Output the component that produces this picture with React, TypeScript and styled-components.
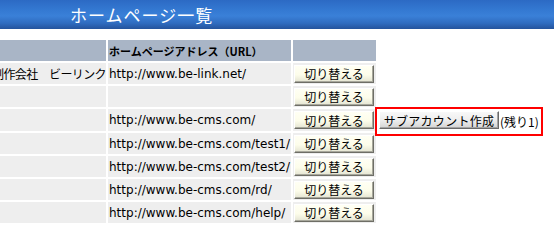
import React from "react";
import styled, { createGlobalStyle } from "styled-components";

type ISite = {
    company: string;
    url: string;
    subAccount?: number;
};

const sites: ISite[] = [
    { company: "制作会社　ビーリンク", url: "http://www.be-link.net/" },
    { company: "", url: "" },
    { company: "", url: "http://www.be-cms.com/", subAccount: 1 },
    { company: "", url: "http://www.be-cms.com/test1/" },
    { company: "", url: "http://www.be-cms.com/test2/" },
    { company: "", url: "http://www.be-cms.com/rd/" },
    { company: "", url: "http://www.be-cms.com/help/" },
];

const GlobalStyle = createGlobalStyle`
    body {
        margin: 0;
        background: #ffffff;
        font-family: "DejaVu Sans", "Noto Sans CJK JP", sans-serif;
        overflow: hidden;
    }
`;

const Page = styled.div`
    width: 554px;
    height: 250px;
    overflow: hidden;
`;

const TitleBar = styled.h1`
    margin: 0;
    height: 29px;
    padding-left: 70px;
    background: linear-gradient(
        to bottom,
        #2c6ac4 0%,
        #3479d2 35%,
        #3a80d8 55%,
        #2f6cc0 80%,
        #24539c 100%
    );
    color: #ffffff;
    font-family: "Noto Sans CJK JP", sans-serif;
    font-size: 17px;
    font-weight: 400;
    line-height: 29px;
    letter-spacing: 1px;
`;

const Table = styled.table`
    margin: 9px 0 0 -12px;
    border-collapse: separate;
    border-spacing: 2px;
    font-size: 12px;
`;

const HeadCell = styled.th<{ width: number }>`
    width: ${({ width }) => width}px;
    height: 21px;
    padding: 0 0 0 1px;
    background: #a9b5c6;
    color: #000000;
    font-family: "Noto Sans CJK JP", sans-serif;
    font-size: 11px;
    font-weight: 700;
    text-align: left;
    white-space: nowrap;
    box-sizing: border-box;
`;

const Cell = styled.td<{ tall?: boolean }>`
    height: ${({ tall }) => (tall ? 22 : 21)}px;
    padding: 0 0 0 1px;
    background: #eeeeee;
    white-space: nowrap;
    box-sizing: border-box;
`;

const CompanyCell = styled(Cell)`
    padding-left: 2px;
    font-family: "Noto Sans CJK JP", sans-serif;
    font-size: 12px;
    letter-spacing: -0.6px;
`;

const UrlCell = styled(Cell)`
    font-family: "DejaVu Sans", sans-serif;
    font-size: 12px;
    color: #000000;
`;

const ExtraCell = styled.td`
    position: relative;
    padding: 0 0 0 1px;
    white-space: nowrap;
`;

const SwitchButton = styled.button`
    display: block;
    width: 80px;
    height: 18px;
    padding: 0;
    border: 1px solid;
    border-color: #ffffff #6e6e66 #6e6e66 #ffffff;
    background: linear-gradient(to bottom, #fffff4 0%, #fdfdea 55%, #e4e4d2 100%);
    box-shadow: inset -1px -1px 0 #a8a89c;
    font-family: "Noto Sans CJK JP", sans-serif;
    font-size: 12px;
    line-height: 15px;
    color: #000000;
    :hover {
        cursor: pointer;
    }
`;

const SubRow = styled.div`
    display: flex;
    align-items: center;
    gap: 1px;
`;

const SubButton = styled.button`
    width: 120px;
    height: 18px;
    padding: 0;
    border: 1px solid;
    border-color: #ffffff #6a6a6a #6a6a6a #ffffff;
    background: linear-gradient(to bottom, #f8f8f8 0%, #eeeeee 50%, #d4d4d4 100%);
    box-shadow: inset -1px -1px 0 #a4a4a4;
    font-family: "Noto Sans CJK JP", sans-serif;
    font-size: 12px;
    line-height: 15px;
    letter-spacing: 0.3px;
    color: #000000;
`;

const Remaining = styled.span`
    margin-top: 3px;
    font-family: "Noto Sans CJK JP", sans-serif;
    font-size: 12px;
    color: #000000;
`;

const Highlight = styled.div`
    position: absolute;
    left: -3px;
    top: -2px;
    width: 168px;
    height: 29px;
    border: 2px solid #ff0000;
    box-sizing: border-box;
    pointer-events: none;
`;

const App = () => {
    return (
        <Page>
            <GlobalStyle />
            <TitleBar>ホームページ一覧</TitleBar>
            <Table>
                <thead>
                    <tr>
                        <HeadCell width={115}></HeadCell>
                        <HeadCell width={183}>ホームページアドレス（URL）</HeadCell>
                        <HeadCell width={83}></HeadCell>
                    </tr>
                </thead>
                <tbody>
                    {sites.map((site, i) => (
                        <tr key={i}>
                            <CompanyCell tall={!!site.subAccount}>{site.company}</CompanyCell>
                            <UrlCell tall={!!site.subAccount}>{site.url}</UrlCell>
                            <Cell tall={!!site.subAccount}>
                                <SwitchButton>切り替える</SwitchButton>
                            </Cell>
                            <ExtraCell>
                                {site.subAccount !== undefined && (
                                    <>
                                        <SubRow>
                                            <SubButton>サブアカウント作成</SubButton>
                                            <Remaining>(残り{site.subAccount})</Remaining>
                                        </SubRow>
                                        <Highlight />
                                    </>
                                )}
                            </ExtraCell>
                        </tr>
                    ))}
                </tbody>
            </Table>
        </Page>
    );
};

export default App;
